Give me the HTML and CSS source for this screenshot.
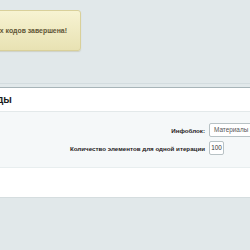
FILE: index.html
```html
<!DOCTYPE html>
<html lang="ru">
<head>
<meta charset="UTF-8" />
<title>Символьные коды</title>
<link rel="stylesheet" href="styles.css">
</head>
<body>
  <div class="note">
    <span class="note-text">Генерация символьных кодов завершена!</span>
  </div>

  <div class="tabs-line"></div>

  <div class="panel">
    <div class="panel-head">Символьные коды</div>
    <div class="panel-body">
      <div class="form-row">
        <label class="form-label">Инфоблок:</label>
        <div class="form-field">
          <span class="select">Материалы [1]</span>
        </div>
      </div>
      <div class="form-row">
        <label class="form-label">Количество элементов для одной итерации</label>
        <div class="form-field">
          <span class="input">100</span>
        </div>
      </div>
    </div>
    <div class="panel-foot"></div>
  </div>
</body>
</html>
```

FILE: styles.css
```css
html, body {
  margin: 0;
  padding: 0;
  overflow: hidden;
}

body {
  background: #e1e8ea;
  font-family: "Liberation Sans", Arial, sans-serif;
  padding-top: 10px;
}

/* сообщение об успехе */
.note {
  box-sizing: border-box;
  width: 240px;
  height: 41px;
  margin-left: -159px;
  display: flex;
  align-items: center;
  justify-content: flex-end;
  padding-right: 13px;
  background: linear-gradient(#f7f3d2, #e8e2b3);
  border: 1px solid #d9d09a;
  border-radius: 3px;
  box-shadow: 0 1px 1px rgba(150, 140, 90, 0.25);
}
.note-text {
  font-size: 6.9px;
  font-weight: bold;
  color: #5e5535;
  white-space: nowrap;
}

.tabs-line {
  margin-top: 32px;
  height: 3px;
  border-top: 1px solid #d3dcdf;
}

.panel {
  border-top: 1px solid #a7b4b8;
  background: #fff;
  border-bottom: 1px solid #d5dddf;
}
.panel-head {
  height: 23px;
  line-height: 24px;
  margin-left: -82px;
  font-size: 10px;
  font-weight: bold;
  color: #1b1d1e;
  border-bottom: 1px solid #e3e9ea;
  white-space: nowrap;
}
.panel-body {
  background: #f5f8f9;
  padding: 11px 0 12px;
  border-bottom: 1px solid #e8eeef;
}
.form-row {
  display: grid;
  grid-template-columns: 207px 1fr;
  align-items: center;
  margin-bottom: 4px;
}
.form-row:last-child {
  margin-bottom: 0;
}
.form-label {
  text-align: right;
  padding-right: 2px;
  font-size: 6.2px;
  font-weight: bold;
  color: #1f2122;
  white-space: nowrap;
}
.form-field {
  display: flex;
  padding-left: 2px;
}
.select, .input {
  box-sizing: border-box;
  height: 14px;
  line-height: 12px;
  background: #fff;
  border: 1px solid #b8c2c5;
  border-radius: 2px;
  font-size: 6.4px;
  color: #555;
  white-space: nowrap;
}
.select {
  flex: none;
  width: 60px;
  padding-left: 4px;
}
.input {
  width: 15px;
  text-align: center;
  color: #333;
}
.panel-foot {
  height: 29px;
}
```
